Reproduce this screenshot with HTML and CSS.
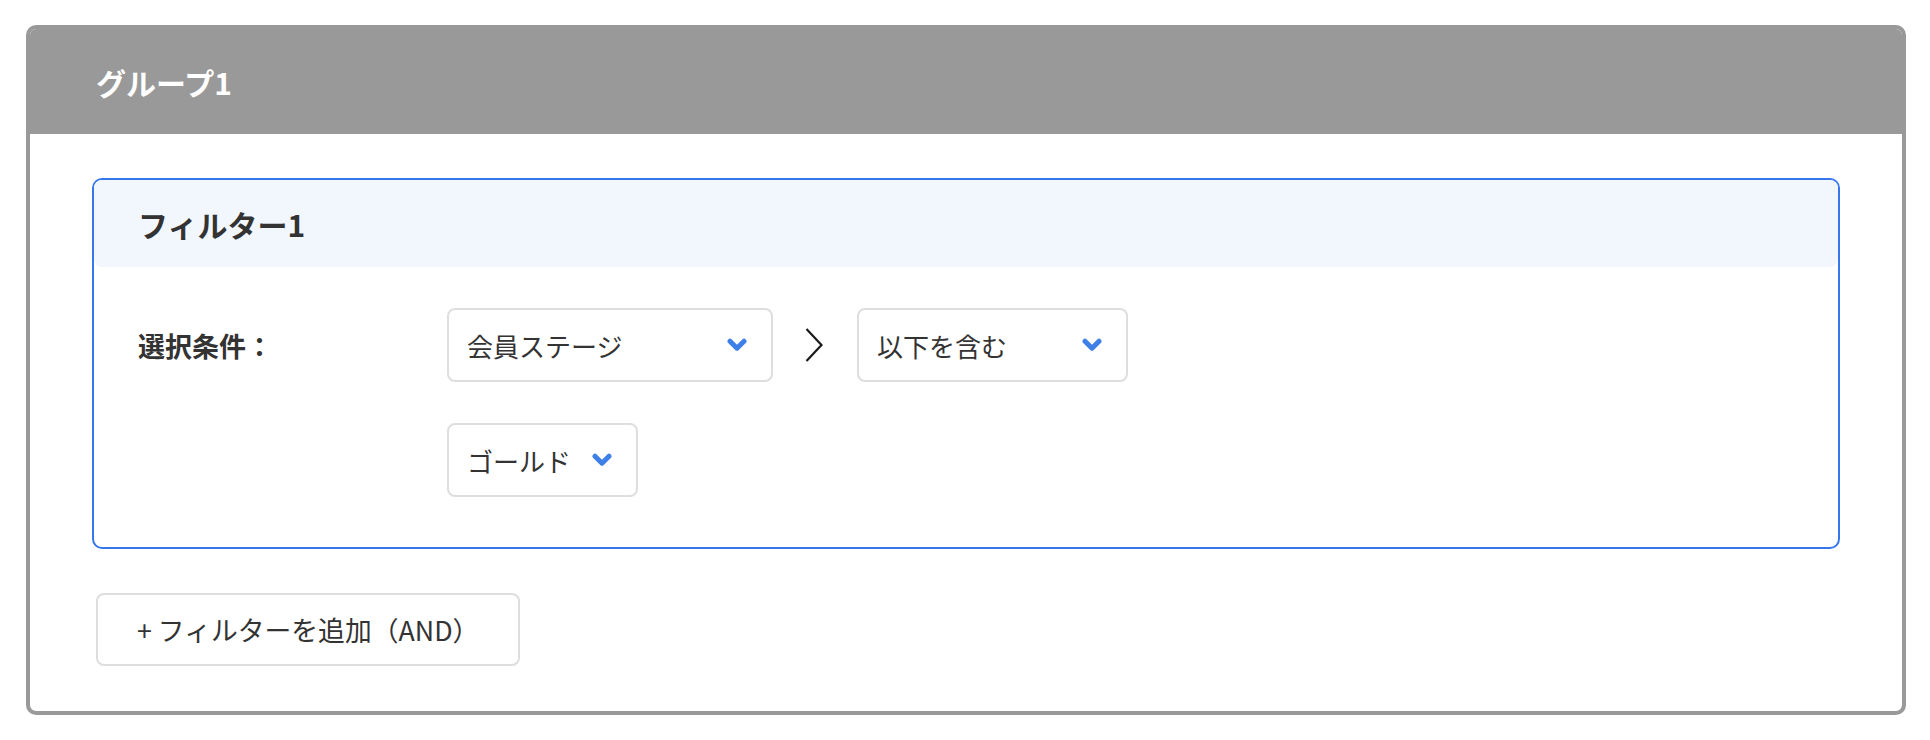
FILE: index.html
```html
<!DOCTYPE html>
<html lang="ja">
<head>
<meta charset="utf-8">
<link rel="stylesheet" href="styles.css">
</head>
<body>
<div class="group">
  <div class="group-header">グループ1</div>
  <div class="group-body">
    <div class="filter">
      <div class="filter-header">フィルター1</div>
      <div class="filter-body">
        <div class="label">選択条件：</div>
        <div class="rows">
          <div class="row">
            <div class="select w-attr"><span>会員ステージ</span><svg class="chev" viewBox="0 0 20 14" width="20" height="14"><polyline points="3,3.2 10,10.2 17,3.2"/></svg></div>
            <svg class="arrow" viewBox="0 0 18 34" width="18" height="34"><polyline points="1.5,1 16.5,17 1.5,33"/></svg>
            <div class="select w-op"><span>以下を含む</span><svg class="chev" viewBox="0 0 20 14" width="20" height="14"><polyline points="3,3.2 10,10.2 17,3.2"/></svg></div>
          </div>
          <div class="row">
            <div class="select w-auto"><span>ゴールド</span><svg class="chev" viewBox="0 0 20 14" width="20" height="14"><polyline points="3,3.2 10,10.2 17,3.2"/></svg></div>
          </div>
        </div>
      </div>
    </div>
    <button class="add-btn">+ フィルターを追加（AND）</button>
  </div>
</div>
</body>
</html>
```

FILE: styles.css
```css
* { box-sizing: border-box; }
html, body { margin: 0; padding: 0; background: #ffffff; }
body {
  font-family: "Noto Sans CJK JP", "Noto Sans", sans-serif;
  color: #333333;
  padding: 25px 24px 0 26px;
}
.group {
  width: 1880px;
  height: 690px;
  border: 4px solid #999999;
  border-radius: 10px;
  overflow: hidden;
  background: #ffffff;
  display: flex;
  flex-direction: column;
}
.group-header {
  background: #999999;
  color: #ffffff;
  font-size: 30px;
  font-weight: 700;
  display: flex;
  align-items: center;
  padding-left: 66px;
  margin-top: -4px;
  padding-top: 4px;
  height: 109px;
}
.group-body {
  padding: 44px 62px 44px 62px;
  display: flex;
  flex-direction: column;
  align-items: flex-start;
  gap: 44px;
}
.filter {
  width: 100%;
  border: 2px solid #3677ee;
  border-radius: 10px;
}
.filter-header {
  height: 87px;
  background: #f2f7fe;
  border-radius: 8px;
  display: flex;
  align-items: center;
  padding-left: 44px;
  font-size: 30px;
  font-weight: 700;
  color: #333333;
}
.filter-body {
  display: grid;
  grid-template-columns: 309px 1fr;
  padding: 41px 46px 50px 44px;
}
.label {
  font-size: 27px;
  font-weight: 700;
  height: 74px;
  display: flex;
  align-items: center;
  color: #333333;
}
.rows {
  display: flex;
  flex-direction: column;
  gap: 41px;
}
.row {
  display: flex;
  align-items: center;
}
.select {
  height: 74px;
  border: 2px solid #dedede;
  border-radius: 8px;
  display: flex;
  align-items: center;
  justify-content: space-between;
  padding: 0 24px 0 18px;
  font-size: 26px;
  color: #333333;
  background: #ffffff;
}
.w-attr { width: 326px; }
.w-op { width: 271px; }
.w-auto { gap: 21px; }
.chev polyline {
  fill: none;
  stroke: #3f7fe8;
  stroke-width: 5;
  stroke-linecap: round;
  stroke-linejoin: round;
}
.arrow {
  margin: 0 34px 0 32px;
}
.arrow polyline {
  fill: none;
  stroke: #1a1a1a;
  stroke-width: 2.2;
  stroke-linejoin: miter;
}
.add-btn {
  margin-left: 4px;
  height: 73px;
  width: 424px;
  border: 2px solid #dedede;
  border-radius: 8px;
  background: #ffffff;
  font-family: "Noto Sans CJK JP", "Noto Sans", sans-serif;
  font-size: 26.8px;
  color: #333333;
  text-align: left;
  padding: 0 0 0 39px;
  cursor: pointer;
}
```
